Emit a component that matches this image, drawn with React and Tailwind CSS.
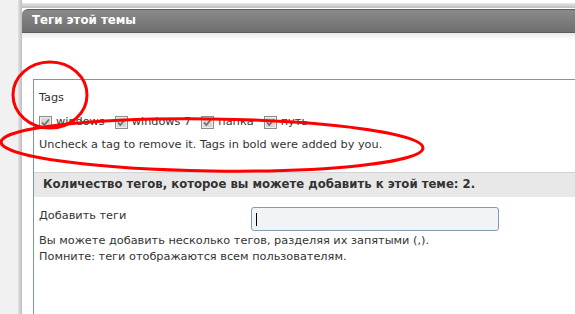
import React from "react";

const font = { fontFamily: '"DejaVu Sans", Verdana, sans-serif' };

function Box({ label }) {
  return (
    <span className="flex items-center gap-[4px]">
      <svg width="13" height="13" viewBox="0 0 13 13" className="shrink-0">
        <rect x="0.5" y="0.5" width="12" height="12" fill="#d8d6d2" stroke="#8c8c8c" />
        <rect x="1.5" y="1.5" width="10" height="10" fill="none" stroke="#eeeeee" />
        <path d="M3 6.5 L5.3 9 L10 3.5" fill="none" stroke="#6b6b6b" strokeWidth="1.6" />
      </svg>
      <span>{label}</span>
    </span>
  );
}

export default function App() {
  const tags = ["windows", "windows 7", "папка", "путь"];

  return (
    <div className="relative w-[575px] h-[314px] overflow-hidden bg-[#f1f1f1] flex text-[11.3px] text-[#333]" style={font}>
      <div className="w-[18px] shrink-0" />
      <div className="w-[4px] shrink-0 bg-gradient-to-r from-[#e2e2e2] to-[#bdbdbd]" />
      <div className="w-[600px] shrink-0 flex flex-col bg-white">
        {/* bottom of the panel above */}
        <div className="h-[3px] bg-white" />
        <div className="h-[5px] bg-gradient-to-b from-[#e8e8e8] to-[#bcbcbc]" />
        <div className="h-[1px] bg-white" />

        {/* header */}
        <div className="h-[24px] rounded-tl-[6px] border-t border-b border-[#5c5c5c] bg-gradient-to-b from-[#8a8a8a] to-[#6f6f6f] flex items-center pl-[10px]">
          <span className="text-white font-bold text-[11.8px]">Теги этой темы</span>
        </div>

        {/* content */}
        <div className="flex-1 flex flex-col bg-gradient-to-b from-[#e9e9e9] via-white to-white bg-[length:100%_14px] bg-no-repeat bg-white pl-[11px] pt-[46px]">
          <div className="flex-1 flex flex-col border-l border-t border-[#7d94ab]">
            <div className="pl-[5px] pt-[10px] leading-[16px]">Tags</div>
            <div className="pl-[5px] mt-[8px] h-[16px] flex items-center gap-[10px] leading-[16px]">
              {tags.map((t) => (
                <Box key={t} label={t} />
              ))}
            </div>
            <div className="pl-[5px] mt-[7px] leading-[16px]">
              Uncheck a tag to remove it. Tags in bold were added by you.
            </div>

            <div className="mt-[19px] h-[25px] border-t border-[#d2d2d2] bg-[#e8e8e8] flex items-center pl-[9px]">
              <span className="font-bold text-[11.7px] text-[#333]">
                Количество тегов, которое вы можете добавить к этой теме: 2.
              </span>
            </div>

            <div className="pl-[5px] mt-[10px] flex items-start">
              <div className="w-[212px] pt-[1px] leading-[16px]">Добавить теги</div>
              <div className="w-[248px] h-[24px] rounded-[3px] border border-[#7f9cb8] bg-[#f1f4f7] flex items-center pl-[4px]">
                <div className="w-[1px] h-[13px] bg-black" />
              </div>
            </div>
            <div className="pl-[5px] mt-[2px] leading-[16px]">
              Вы можете добавить несколько тегов, разделяя их запятыми (,).
            </div>
            <div className="pl-[5px] leading-[16px]">Помните: теги отображаются всем пользователям.</div>
          </div>
        </div>
      </div>

      {/* red annotations */}
      <svg className="absolute inset-0 pointer-events-none" width="575" height="314">
        <ellipse cx="50" cy="95" rx="37" ry="33" fill="none" stroke="#f00" strokeWidth="3" />
        <ellipse cx="212" cy="145" rx="211" ry="26" fill="none" stroke="#f00" strokeWidth="3" transform="rotate(0.8 212 145)" />
      </svg>
    </div>
  );
}
